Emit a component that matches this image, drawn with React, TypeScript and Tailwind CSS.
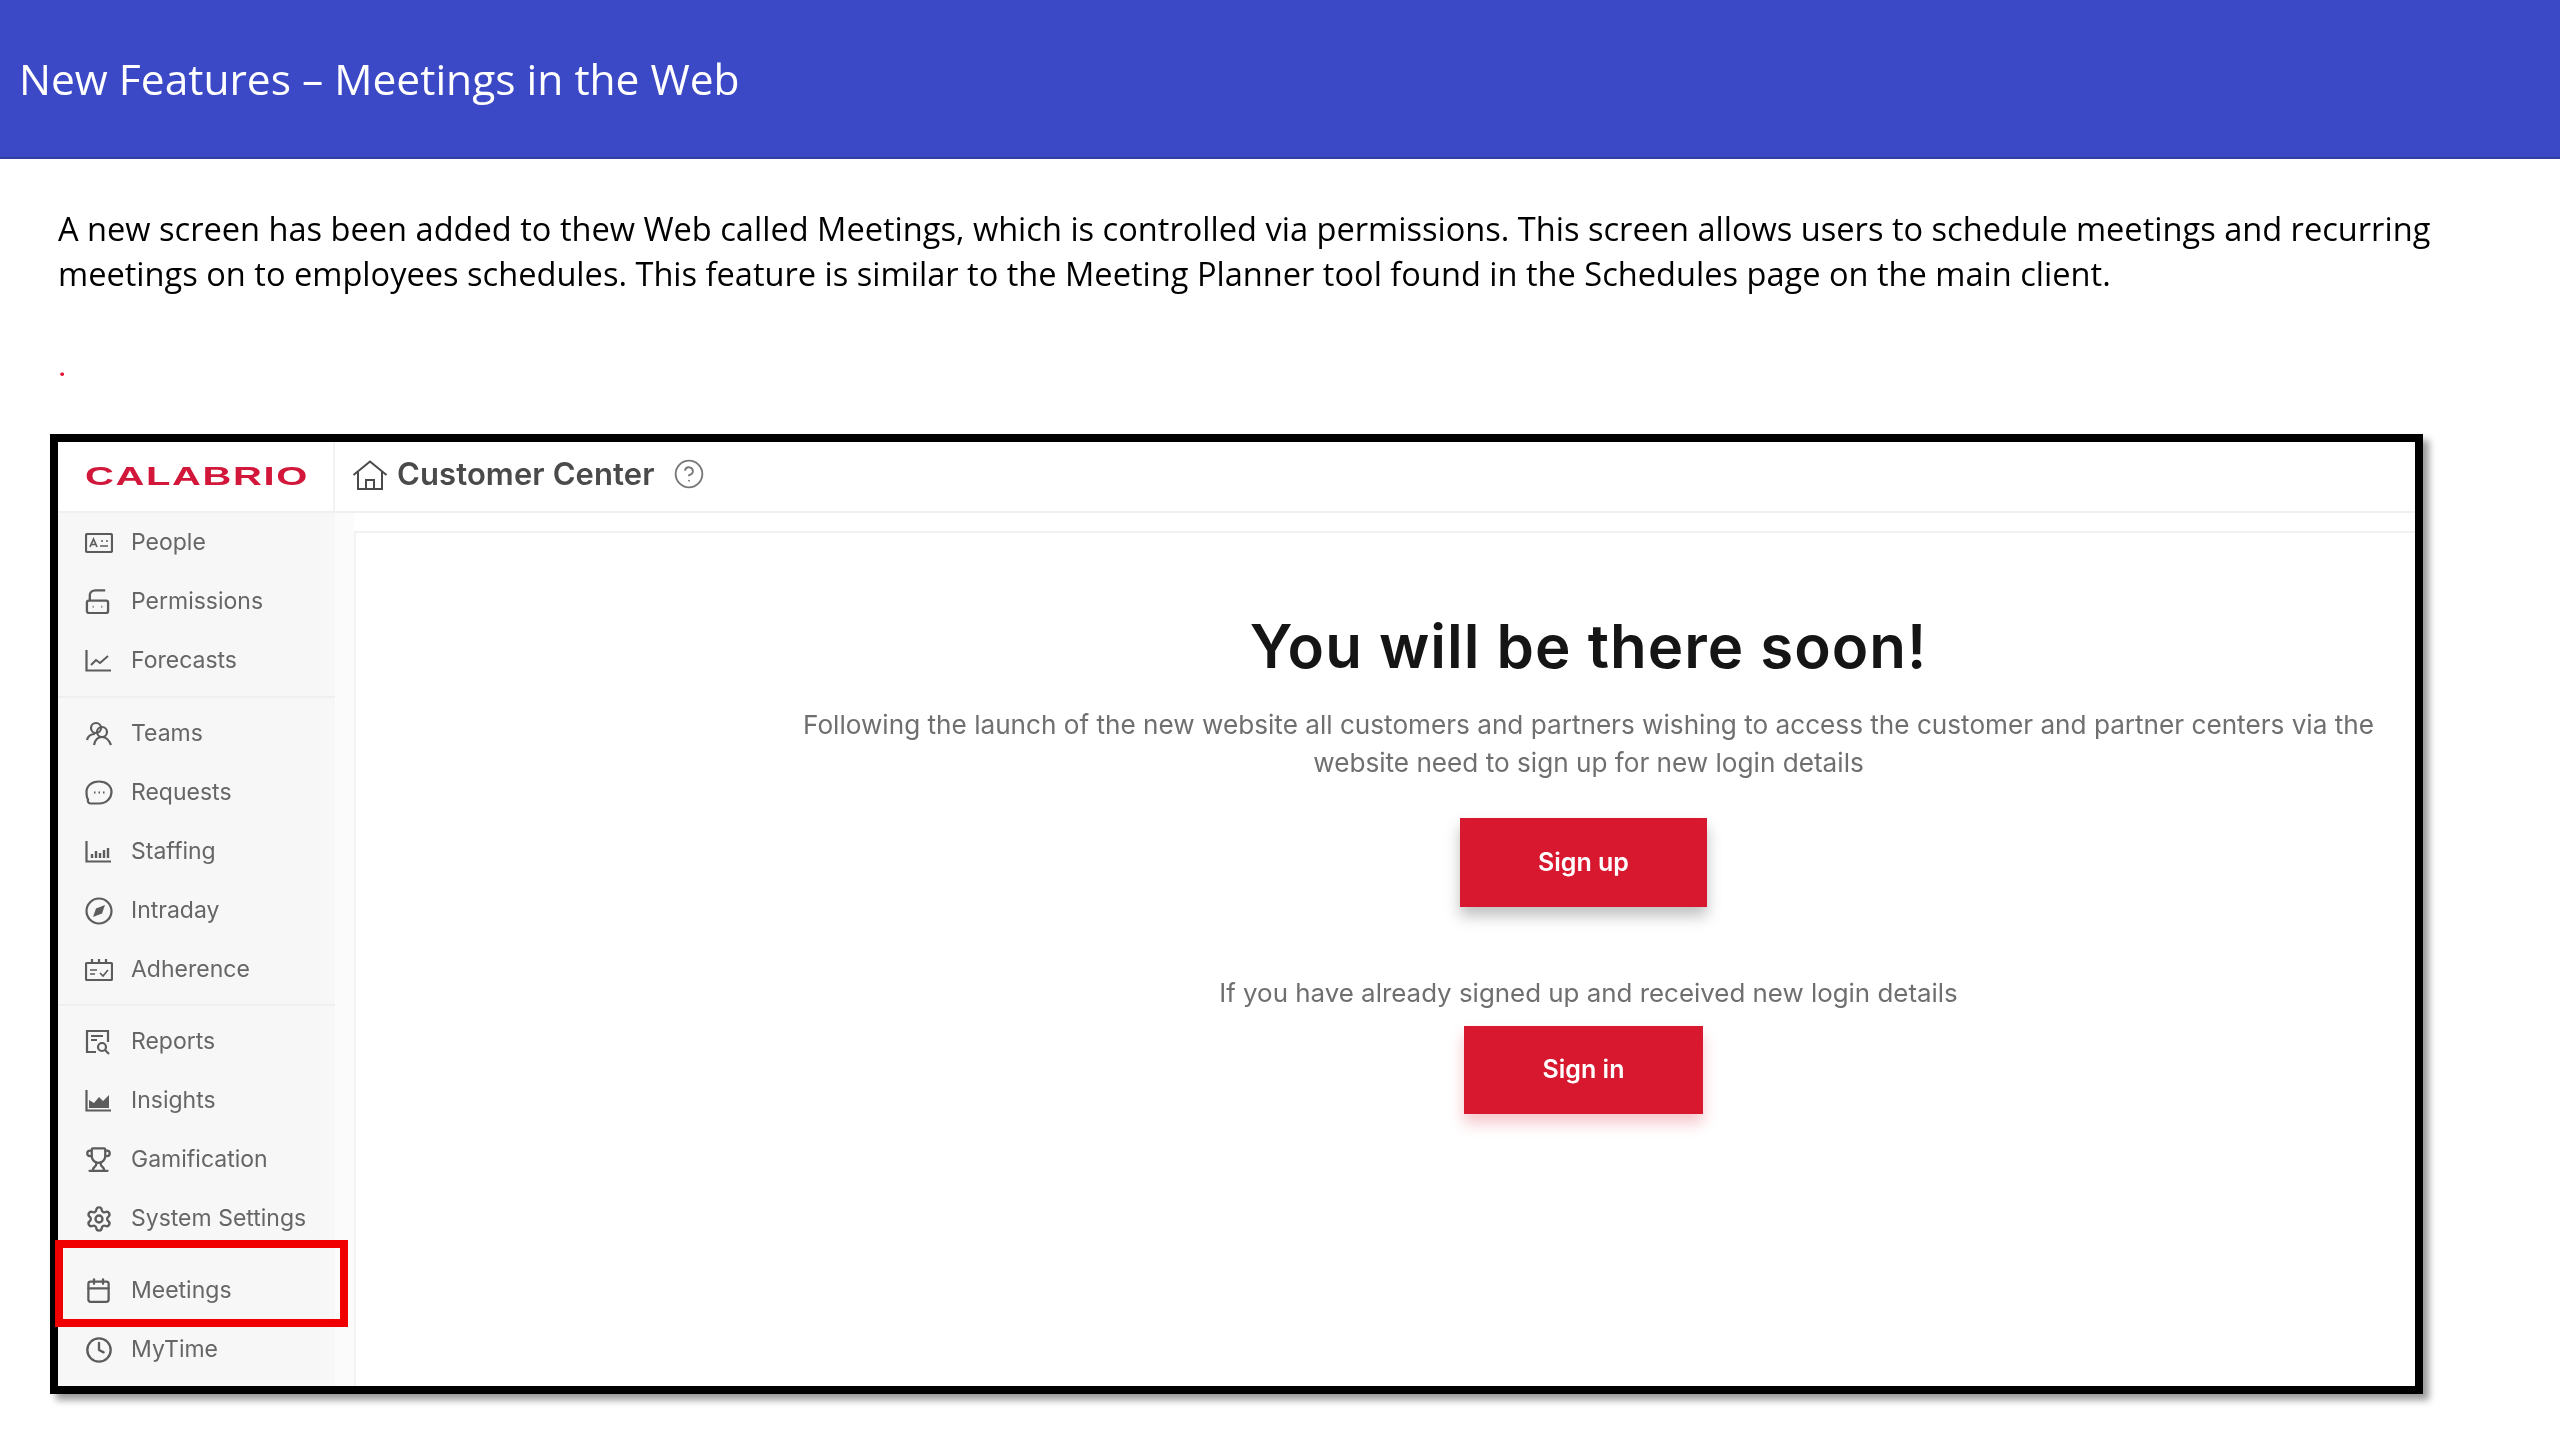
import type { ReactNode } from 'react'
import { Calendar, CircleHelp, Clock, Settings, Trophy } from 'lucide-react'

function PeopleIcon() {
  return (
    <svg viewBox="0 0 28 20" className="w-7 h-5" fill="none" stroke="currentColor" strokeWidth="2.2">
      <rect x="1" y="1" width="26" height="18" rx="1.5" />
      <path d="M5 14l3.5-8 3.5 8M6.5 11.5h4" strokeWidth="1.7" />
      <path d="M16 8h2M21 8h2M15 13h8" strokeWidth="1.7" />
    </svg>
  )
}

function PermissionsIcon() {
  return (
    <svg viewBox="0 0 26 26" className="w-[25px] h-[25px]" fill="none" stroke="currentColor" strokeWidth="2.4">
      <path d="M5 12V6.500C5 3.500 7.500 1.500 11 1.500h10" />
      <rect x="2" y="12" width="22" height="13" rx="2" />
      <path d="M8 18.500h1M17 18.500h1" strokeWidth="2" />
    </svg>
  )
}

function ForecastsIcon() {
  return (
    <svg viewBox="0 0 26 22" className="w-[26px] h-[22px]" fill="none" stroke="currentColor" strokeWidth="2.2">
      <path d="M1.500 0v20.500H26" />
      <path d="M6 15l5-5 4 3 8-7" strokeWidth="2" />
    </svg>
  )
}

function TeamsIcon() {
  return (
    <svg viewBox="0 0 28 26" className="w-7 h-[26px]" fill="none" stroke="currentColor" strokeWidth="2.2">
      <circle cx="11" cy="7" r="5" />
      <circle cx="17" cy="11" r="5" />
      <path d="M2 19c1-4 4-6 8-6M9 24c1-5 4-8 8-8s7 3 9 8" />
    </svg>
  )
}

function RequestsIcon() {
  return (
    <svg viewBox="0 0 28 25" className="w-7 h-[25px]" fill="none" stroke="currentColor" strokeWidth="2.2">
      <path d="M14 1.500c7.500 0 12.500 4.500 12.500 10.500S21.500 23.500 14 23.500H5.500C3 23.500 2.500 21 3 19.500 1.500 17.500 1.500 14 1.500 12 1.500 6 6.500 1.500 14 1.500z" />
      <path d="M9 12.500h1.500M13.500 12.500H15M18 12.500h1.500" strokeWidth="1.800" />
    </svg>
  )
}

function StaffingIcon() {
  return (
    <svg viewBox="0 0 26 22" className="w-[26px] h-[22px]" fill="none" stroke="currentColor" strokeWidth="2.2">
      <path d="M1.500 0v20.500H26" />
      <path d="M7 17v-4M11 17v-7M15 17v-5M19 17v-8M23 17V7" strokeWidth="2.400" />
    </svg>
  )
}

function IntradayIcon() {
  return (
    <svg viewBox="0 0 28 28" className="w-7 h-7" fill="none" stroke="currentColor" strokeWidth="2.2">
      <circle cx="14" cy="14" r="12.500" />
      <path d="M20 8l-9 3.500L8 20l9-3.500z" fill="currentColor" stroke="none" />
    </svg>
  )
}

function AdherenceIcon() {
  return (
    <svg viewBox="0 0 28 22" className="w-7 h-[22px]" fill="none" stroke="currentColor" strokeWidth="2.2">
      <rect x="1" y="4" width="26" height="17" rx="1" />
      <path d="M7 0v5M14 0v5M21 0v5" />
      <path d="M5 11h7M5 15h5M15 14l3 3 5-6" strokeWidth="1.700" />
    </svg>
  )
}

function ReportsIcon() {
  return (
    <svg viewBox="0 0 26 26" className="w-[26px] h-[26px]" fill="none" stroke="currentColor" strokeWidth="2.2">
      <path d="M11 23H2V2h21v11" />
      <path d="M6 7h12M6 11h6" />
      <circle cx="17" cy="18" r="4" />
      <path d="M20 21l4 4" />
    </svg>
  )
}

function InsightsIcon() {
  return (
    <svg viewBox="0 0 26 22" className="w-[26px] h-[22px]" fill="none" stroke="currentColor" strokeWidth="2.2">
      <path d="M1.500 0v20.500H26" />
      <path d="M4 18v-8l5 3 5-6 4 4 6-6v13z" fill="currentColor" stroke="none" />
    </svg>
  )
}

function HomeIcon() {
  return (
    <svg viewBox="0 0 36 30" className="w-9 h-[30px] -mt-1" fill="none" stroke="currentColor" strokeWidth="2">
      <path d="M1.500 15L18 1.500 34.500 15" />
      <path d="M6 12v17h24V12" />
      <path d="M14 29v-9h8v9" />
    </svg>
  )
}

function Row({ icon, label }: { icon: ReactNode; label: string }) {
  return (
    <div className="flex items-center h-[59px] pl-[27px]">
      <span className="w-[46px] flex items-center text-[#5c5c5c]">{icon}</span>
      <span className="text-[23px] text-[#666]">{label}</span>
    </div>
  )
}

function Sidebar() {
  return (
    <aside className="w-[277px] bg-[#f7f7f7] flex flex-col relative">
      <Row icon={<PeopleIcon />} label="People" />
      <Row icon={<PermissionsIcon />} label="Permissions" />
      <Row icon={<ForecastsIcon />} label="Forecasts" />
      <div className="mt-1.5 mb-1.5 border-t-2 border-[#efefef]" />
      <Row icon={<TeamsIcon />} label="Teams" />
      <Row icon={<RequestsIcon />} label="Requests" />
      <Row icon={<StaffingIcon />} label="Staffing" />
      <Row icon={<IntradayIcon />} label="Intraday" />
      <Row icon={<AdherenceIcon />} label="Adherence" />
      <div className="mt-[5px] mb-1.5 border-t-2 border-[#efefef]" />
      <Row icon={<ReportsIcon />} label="Reports" />
      <Row icon={<InsightsIcon />} label="Insights" />
      <Row icon={<Trophy size={27} strokeWidth={2} />} label="Gamification" />
      <Row icon={<Settings size={28} strokeWidth={2} />} label="System Settings" />
      <div className="h-[13px]" />
      <Row icon={<Calendar size={27} strokeWidth={2} />} label="Meetings" />
      <Row icon={<Clock size={28} strokeWidth={2} />} label="MyTime" />
      {/* highlight drawn over the slide */}
      <div className="absolute left-[-3px] top-[727px] w-[293px] h-[87px] border-[8px] border-[#f00000]" />
    </aside>
  )
}

export default function App() {
  return (
    <div className="w-[2560px] h-[1440px] bg-white overflow-hidden font-['Open_Sans',sans-serif] text-black blur-[0.6px]">
      <header className="h-[159px] bg-[#3c49c6] border-b-2 border-[#34409f] flex items-center pl-[19px] text-white text-[42.5px]">
        New Features – Meetings in the Web
      </header>

      <div className="pl-[58px] pt-[47px] h-[180px] text-[32.6px] leading-[45px]">
        <p className="whitespace-nowrap">A new screen has been added to thew Web called Meetings, which is controlled via permissions. This screen allows users to schedule meetings and recurring</p>
        <p className="whitespace-nowrap">meetings on to employees schedules. This feature is similar to the Meeting Planner tool found in the Schedules page on the main client.</p>
        <p className="text-[#e0102f] text-[22px] font-bold leading-none pl-[1px] mt-[60px]">.</p>
      </div>

      <div className="ml-[50px] mt-[95px] w-[2373px] h-[960px] border-8 border-black bg-white shadow-[6px_6px_7px_rgba(0,0,0,0.4)] flex flex-col font-['Inter',sans-serif]">
        <div className="h-[71px] flex border-b-2 border-[#f0f0f0] shrink-0">
          <div className="w-[277px] border-r-2 border-[#f2f2f2] pl-[27px] flex items-center">
            <span className="font-['Liberation_Sans',sans-serif] font-bold text-[25px] text-[#d2173a] leading-none origin-left scale-x-[1.6] tracking-[1px]">CALABRIO</span>
          </div>
          <div className="flex items-center pl-[17px] text-[#4a4a4a]">
            <HomeIcon />
            <span className="ml-[9px] text-[31px] font-semibold tracking-[0.1px] -mt-[4px]">Customer Center</span>
            <CircleHelp size={32} strokeWidth={1.4} className="ml-[18px] -mt-[6px] text-[#777]" />
          </div>
        </div>

        <div className="flex-1 flex min-h-0">
          <Sidebar />
          <div className="w-[19px] bg-[#fbfbfb]" />
          <main className="flex-1 border-l-2 border-t-2 border-[#f2f2f2] mt-[18px] pl-[446px] pr-[40px] flex flex-col items-center">
            <h1 className="mt-[81px] text-[60px] leading-[64px] font-semibold tracking-[1px] text-[#151515] whitespace-nowrap">You will be there soon!</h1>
            <p className="mt-[28px] text-[26.150px] leading-[38px] text-[#6f6f6f] text-center whitespace-nowrap">
              Following the launch of the new website all customers and partners wishing to access the customer and partner centers via the<br />
              website need to sign up for new login details
            </p>
            <button className="mt-[36px] mr-[10px] w-[247px] h-[89px] bg-[#d7182f] text-white text-[25px] font-semibold shadow-[0_9px_14px_rgba(0,0,0,0.25)]">Sign up</button>
            <p className="mt-[67px] text-[25.900px] leading-[38px] text-[#6f6f6f] whitespace-nowrap">If you have already signed up and received new login details</p>
            <button className="mt-[14px] mr-[10px] w-[239px] h-[88px] bg-[#d7182f] text-white text-[25px] font-semibold shadow-[0_9px_14px_rgba(215,24,47,0.25)]">Sign in</button>
          </main>
        </div>
      </div>
    </div>
  )
}
